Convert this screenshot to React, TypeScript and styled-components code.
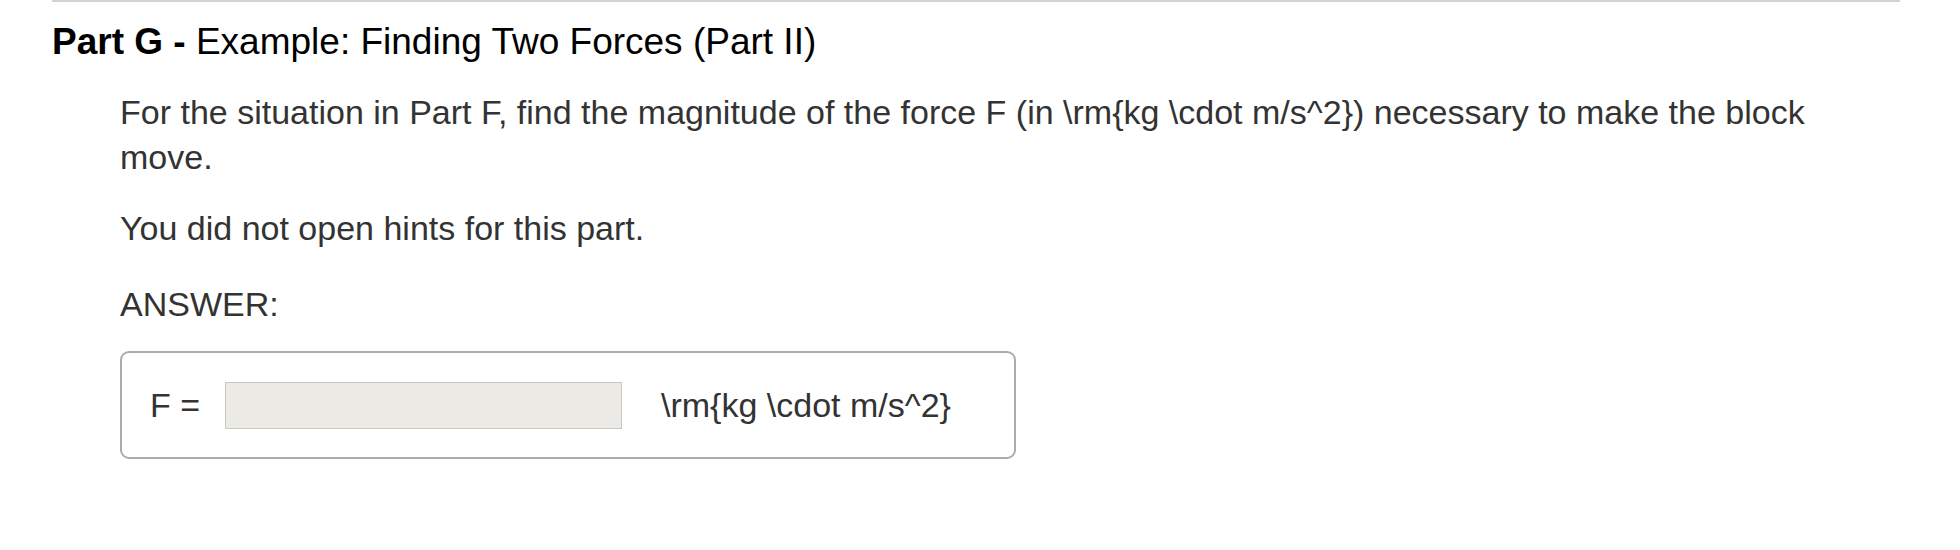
import React from 'react';
import styled, { createGlobalStyle } from 'styled-components';

const GlobalStyle = createGlobalStyle`
  html, body { margin: 0; padding: 0; background: #ffffff; }
  body { font-family: "Liberation Sans", Arial, Helvetica, sans-serif; }
`;

const Page = styled.div`
  width: 1960px;
  height: 550px;
  box-sizing: border-box;
  padding: 0 60px 0 52px;
  background: #fff;
`;

const Rule = styled.div`
  height: 2px;
  background: #d2d2d2;
`;

const Title = styled.h2`
  margin: 20px 0 0;
  font-size: 37px;
  line-height: 40px;
  font-weight: normal;
  color: #000;
  white-space: nowrap;
`;

const PartLabel = styled.strong`
  font-weight: bold;
`;

const Body = styled.div`
  padding: 0 40px 0 68px;
  color: #333;
  font-size: 34px;
  line-height: 45px;
`;

const Para = styled.p<{ $gap: number }>`
  margin: ${(p) => p.$gap}px 0 0;
`;

const AnswerBox = styled.div`
  margin-top: 24px;
  width: 896px;
  height: 108px;
  box-sizing: border-box;
  border: 2px solid #acacac;
  border-radius: 9px;
  display: flex;
  align-items: center;
  padding-left: 28px;
`;

const Label = styled.span`
  width: 75px;
`;

const Field = styled.input`
  width: 397px;
  height: 47px;
  box-sizing: border-box;
  background: #ebeae5;
  border: 1px solid #c8c8c3;
  border-radius: 0;
  margin: 0;
  padding: 0 8px;
  font: inherit;
  outline: none;
`;

const Units = styled.span`
  margin-left: 39px;
`;

export default function App() {
  return (
    <Page>
      <GlobalStyle />
      <Rule />
      <Title>
        <PartLabel>Part G - </PartLabel>Example: Finding Two Forces (Part II)
      </Title>
      <Body>
        <Para $gap={28}>
          For the situation in Part F, find the magnitude of the force F (in \rm&#123;kg \cdot m/s^2&#125;) necessary to make the block move.
        </Para>
        <Para $gap={26}>You did not open hints for this part.</Para>
        <Para $gap={31}>ANSWER:</Para>
        <AnswerBox>
          <Label>F =</Label>
          <Field type="text" />
          <Units>\rm&#123;kg \cdot m/s^2&#125;</Units>
        </AnswerBox>
      </Body>
    </Page>
  );
}
